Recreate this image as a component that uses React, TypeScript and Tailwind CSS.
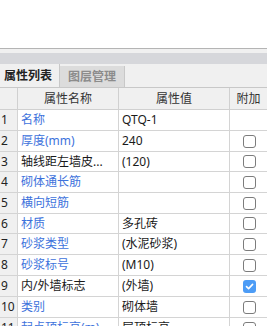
import React from "react";

type Row = { n: number; name: string; blue: boolean; value: string; cb: "none" | "off" | "on"; h: string };

const rows: Row[] = [
  { n: 1, name: "名称", blue: true, value: "QTQ-1", cb: "none", h: "h-[21px]" },
  { n: 2, name: "厚度(mm)", blue: true, value: "240", cb: "off", h: "h-[21px]" },
  { n: 3, name: "轴线距左墙皮...", blue: false, value: "(120)", cb: "off", h: "h-[20px]" },
  { n: 4, name: "砌体通长筋", blue: true, value: "", cb: "off", h: "h-[21px]" },
  { n: 5, name: "横向短筋", blue: true, value: "", cb: "off", h: "h-[21px]" },
  { n: 6, name: "材质", blue: true, value: "多孔砖", cb: "off", h: "h-[20px]" },
  { n: 7, name: "砂浆类型", blue: true, value: "(水泥砂浆)", cb: "off", h: "h-[21px]" },
  { n: 8, name: "砂浆标号", blue: true, value: "(M10)", cb: "off", h: "h-[21px]" },
  { n: 9, name: "内/外墙标志", blue: false, value: "(外墙)", cb: "on", h: "h-[21px]" },
  { n: 10, name: "类别", blue: true, value: "砌体墙", cb: "off", h: "h-[21px]" },
  { n: 11, name: "起点顶标高(m)", blue: true, value: "层顶标高", cb: "off", h: "h-[21px]" },
];

function Check({ state }: { state: "none" | "off" | "on" }) {
  if (state === "none") return null;
  if (state === "on")
    return (
      <div className="w-[13px] h-[13px] rounded-[3px] bg-[#4c9cf6] flex items-center justify-center">
        <svg width="9" height="9" viewBox="0 0 9 9">
          <path d="M1.5 4.6 L3.6 6.6 L7.6 2.4" stroke="white" strokeWidth="1.6" fill="none" strokeLinecap="round" strokeLinejoin="round" />
        </svg>
      </div>
    );
  return <div className="w-[13px] h-[13px] rounded-[3px] border border-[#7c7c7c] bg-white" />;
}

export default function App() {
  return (
    <div
      className="w-[267px] h-[326px] overflow-hidden bg-white text-[12px] leading-[16px] text-[#1a1a1a]"
      style={{ fontFamily: '"Noto Sans", "Noto Sans CJK SC", sans-serif' }}
    >
      <div className="h-[48px] bg-white" />
      <div className="h-px bg-[#b4b4b4]" />
      <div className="h-[4px] bg-[#f0f0f0]" />
      <div className="h-[11px] bg-[#d6d7db]" />
      <div className="h-[24px] bg-[#f0f0f0] border-b border-[#c8c8c8] flex items-stretch">
        <div className="w-[60px] flex items-center pl-[4px] font-bold text-[#222] border-r border-[#c8c8c8]">属性列表</div>
        <div className="mt-[2px] w-[65px] bg-[#dcdcdc] border-r border-[#c8c8c8] flex items-center pl-[8px] font-bold text-[#8c8c8c]">图层管理</div>
      </div>
      <div className="h-[22px] flex bg-[#f0f0f0] border-b border-[#d0d0d0] text-[#333]">
        <div className="w-[18px] border-r border-[#d0d0d0]" />
        <div className="w-[101px] border-r border-[#d0d0d0] flex items-center justify-center">属性名称</div>
        <div className="w-[111px] border-r border-[#d0d0d0] flex items-center justify-center">属性值</div>
        <div className="flex-1 flex items-center justify-center">附加</div>
      </div>
      {rows.map((r) => (
        <div key={r.n} className={`${r.h} flex border-b border-[#d4d4d4] shrink-0`}>
          <div className="w-[18px] bg-[#f0f0f0] border-r border-[#d4d4d4] flex items-center pl-[1px] text-[#222]">{r.n}</div>
          <div
            className={`w-[101px] border-r border-[#d4d4d4] flex items-center pl-[3px] whitespace-nowrap overflow-hidden ${
              r.blue ? "text-[#3d72dc]" : "text-[#1a1a1a]"
            }`}
          >
            {r.name}
          </div>
          <div className="w-[111px] border-r border-[#d4d4d4] flex items-center pl-[3px] whitespace-nowrap overflow-hidden">{r.value}</div>
          <div className="flex-1 flex items-center pl-[13px]">
            <Check state={r.cb} />
          </div>
        </div>
      ))}
    </div>
  );
}
